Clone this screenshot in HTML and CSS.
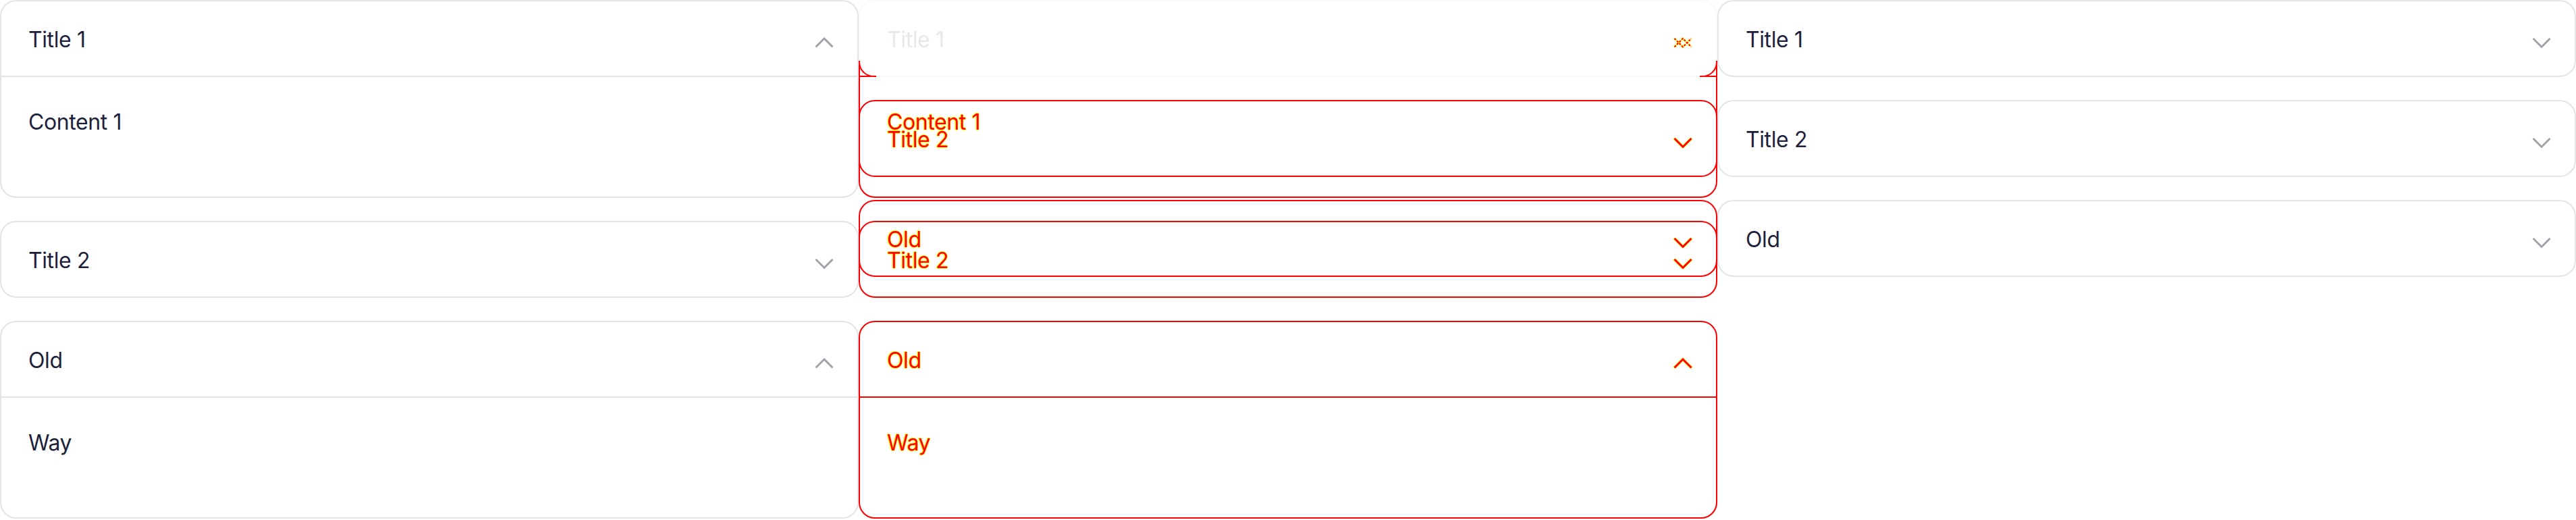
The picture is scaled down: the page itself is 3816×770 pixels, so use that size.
FILE: index.html
```html
<!DOCTYPE html>
<html lang="en">
<head>
<meta charset="utf-8">
<title>Accordion comparison</title>
<link rel="stylesheet" href="styles.css">
</head>
<body>
<main class="panels">
  <section class="panel">
    <div class="card open">
      <div class="head"><span class="label">Title 1</span><svg class="chev" viewBox="0 0 28 18"><polyline points="1.5,15.5 14,3 26.5,15.5"/></svg></div>
      <div class="body">Content 1</div>
    </div>
    <div class="card">
      <div class="head"><span class="label">Title 2</span><svg class="chev" viewBox="0 0 28 18"><polyline points="1.5,3 14,15.5 26.5,3"/></svg></div>
    </div>
    <div class="card open">
      <div class="head"><span class="label">Old</span><svg class="chev" viewBox="0 0 28 18"><polyline points="1.5,15.5 14,3 26.5,15.5"/></svg></div>
      <div class="body">Way</div>
    </div>
  </section>

  <section class="panel diff">
    <div class="layer">
      <div class="card e-first">
        <div class="e-gap"></div>
        <div class="e-body">
          <div class="e-rule"></div>
          <div class="body">Content 1</div>
        </div>
      </div>
      <div class="card">
        <div class="head"><span class="label">Title 2</span><svg class="chev" viewBox="0 0 28 18"><polyline points="1.5,3 14,15.5 26.5,3"/></svg></div>
      </div>
      <div class="card open">
        <div class="head"><span class="label">Old</span><svg class="chev" viewBox="0 0 28 18"><polyline points="1.5,15.5 14,3 26.5,15.5"/></svg></div>
        <div class="body">Way</div>
      </div>
    </div>
    <div class="layer">
      <div class="card faded">
        <div class="head"><span class="label">Title 1</span><svg class="chev mixed" viewBox="0 0 28 18"><polyline points="1.5,15.5 14,3 26.5,15.5"/><polyline points="1.5,3 14,15.5 26.5,3"/></svg></div>
      </div>
      <div class="card">
        <div class="head"><span class="label">Title 2</span><svg class="chev" viewBox="0 0 28 18"><polyline points="1.5,3 14,15.5 26.5,3"/></svg></div>
      </div>
      <div class="card">
        <div class="head"><span class="label">Old</span><svg class="chev" viewBox="0 0 28 18"><polyline points="1.5,3 14,15.5 26.5,3"/></svg></div>
      </div>
    </div>
  </section>

  <section class="panel">
    <div class="card">
      <div class="head"><span class="label">Title 1</span><svg class="chev" viewBox="0 0 28 18"><polyline points="1.5,3 14,15.5 26.5,3"/></svg></div>
    </div>
    <div class="card">
      <div class="head"><span class="label">Title 2</span><svg class="chev" viewBox="0 0 28 18"><polyline points="1.5,3 14,15.5 26.5,3"/></svg></div>
    </div>
    <div class="card">
      <div class="head"><span class="label">Old</span><svg class="chev" viewBox="0 0 28 18"><polyline points="1.5,3 14,15.5 26.5,3"/></svg></div>
    </div>
  </section>
</main>
</body>
</html>
```

FILE: styles.css
```css
* { box-sizing: border-box; }

html, body {
  margin: 0;
  background: #ffffff;
}

body {
  font-family: Inter, "Noto Sans", sans-serif;
  font-size: 32px;
  line-height: 48px;
  color: #1e1f3b;
  overflow: hidden;
}

.panels {
  display: grid;
  grid-template-columns: repeat(3, 1272px);
  height: 770px;
}

.panel {
  display: flex;
  flex-direction: column;
  gap: 34px;
}

.card {
  border: 2px solid #e4e4e7;
  border-radius: 24px;
  background: #ffffff;
}

.head {
  display: flex;
  justify-content: space-between;
  align-items: flex-start;
  padding: 33px 35px 29px 40px;
}

.label {
  letter-spacing: -0.4px;
}

.card.open .head {
  border-bottom: 2px solid #e4e4e7;
}

.body {
  padding: 43px 40px 86px;
  letter-spacing: -0.4px;
}

.chev {
  width: 28px;
  height: 18px;
  margin-top: 19px;
  flex: none;
  overflow: visible;
}

.chev polyline {
  fill: none;
  stroke: #a1a1aa;
  stroke-width: 3;
}

/* ---- diff panel ---- */
.diff {
  display: grid;
  gap: 0;
}

.layer {
  grid-area: 1 / 1;
  display: flex;
  flex-direction: column;
  gap: 34px;
}

.diff .card {
  background: transparent;
  border-color: #ff0000;
  color: #ff0000;
  text-shadow: 1px 0 #ffff00, -1px 0 #ffff00, 0 1px #ffff00, 0 -1px #ffff00;
}

.diff .card.open .head {
  border-bottom-color: #ff0000;
}

.diff .chev polyline {
  stroke: #ff0000;
}

.diff .chev {
  filter: drop-shadow(1px 0 0 #ffff00) drop-shadow(-1px 0 0 #ffff00);
}

.e-first {
  border: none;
  border-radius: 0;
  display: flex;
  flex-direction: column;
}

.diff .card.e-first {
  border: none;
}

.e-gap {
  height: 93px;
}

.e-body {
  border: 2px solid #ff0000;
  border-top: none;
  border-radius: 0 0 24px 24px;
}

.e-rule {
  height: 21px;
  border-bottom: 2px solid #ff0000;
}

.diff .card.faded {
  position: relative;
  background: #ffffff;
  border-color: #f8f8f8;
  color: #e8e8ea;
  text-shadow: none;
}

.faded::before,
.faded::after {
  content: "";
  position: absolute;
  bottom: -2px;
  width: 24px;
  height: 22px;
  border-bottom: 2px solid #ff0000;
}

.faded::before {
  left: -2px;
  border-left: 2px solid #ff0000;
  border-bottom-left-radius: 22px;
}

.faded::after {
  right: -2px;
  border-right: 2px solid #ff0000;
  border-bottom-right-radius: 22px;
}

.diff .chev.mixed polyline {
  stroke-width: 2;
  stroke-dasharray: 3 2;
}
```
